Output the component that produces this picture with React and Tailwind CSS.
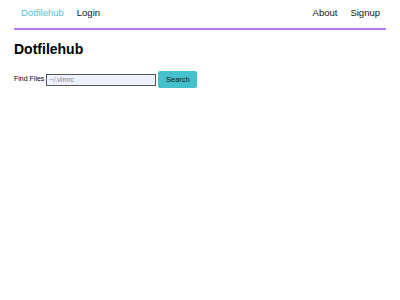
export default function App() {
  return (
    <div className="min-h-[300px] bg-white font-['Liberation_Sans',Arial,sans-serif] text-black">
      <div className="mx-[14px]">
        <nav className="flex items-center justify-between h-[30px] pb-[2px] border-b-2 border-[#b57bee]">
          <div className="flex items-center">
            <a className="px-[7px] text-[9.5px] text-[#4fc4d4]">Dotfilehub</a>
            <a className="px-[6px] text-[9.5px] text-[#111]">Login</a>
          </div>
          <div className="flex items-center">
            <a className="px-[7px] text-[9.5px] text-[#111]">About</a>
            <a className="px-[6px] text-[9.5px] text-[#111]">Signup</a>
          </div>
        </nav>
        <h1 className="mt-[10px] text-[14px] font-bold leading-[18px]">Dotfilehub</h1>
        <form className="mt-[13px] flex items-center">
          <label className="text-[7px] mr-[2px]">Find Files</label>
          <input
            className="w-[110px] h-[12px] border border-[#555] bg-[#eef0fb] px-[2px] text-[7px] outline-none placeholder:text-[#888]"
            placeholder="~/.vimrc"
          />
          <button
            type="button"
            className="ml-[2px] w-[39px] h-[17px] bg-[#45c1cd] rounded-[2px] text-[7.5px] text-[#111]"
          >
            Search
          </button>
        </form>
      </div>
    </div>
  );
}
